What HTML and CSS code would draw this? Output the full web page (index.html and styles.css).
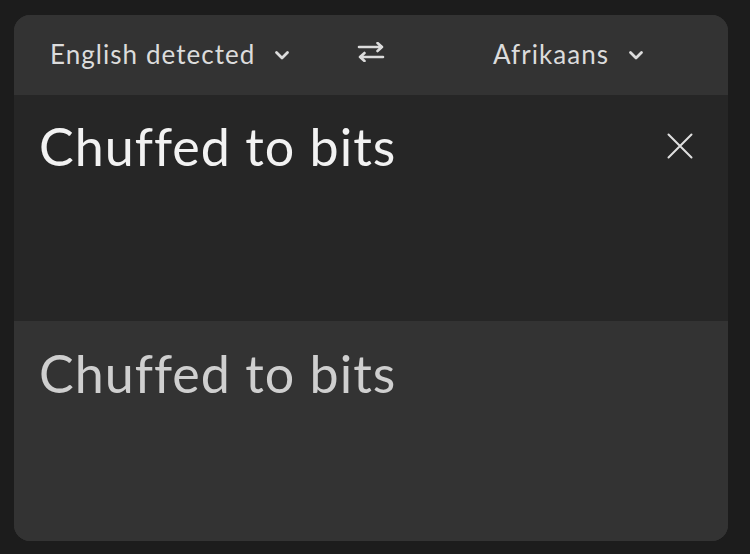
FILE: index.html
```html
<!DOCTYPE html>
<html>
<head>
<meta charset="utf-8">
<link rel="stylesheet" href="styles.css">
</head>
<body>
<div class="card">
  <div class="header">
    <div class="lang lang-from">
      <span class="lang-name">English detected</span>
      <svg class="chev" width="16" height="12" viewBox="0 0 16 12"><path d="M2.5 3.5 L8 9 L13.5 3.5" fill="none" stroke="#dcdcdc" stroke-width="2.8" stroke-linecap="round" stroke-linejoin="round"/></svg>
    </div>
    <div class="swap">
      <svg width="28" height="20" viewBox="0 0 28 20"><g fill="none" stroke="#dcdcdc" stroke-width="2.6" stroke-linecap="round" stroke-linejoin="round"><path d="M2 5 H25 M20.5 1 L25 5 L20.5 9"/><path d="M26 15 H3 M7.5 11 L3 15 L7.5 19"/></g></svg>
    </div>
    <div class="lang lang-to">
      <span class="lang-name">Afrikaans</span>
      <svg class="chev" width="16" height="12" viewBox="0 0 16 12"><path d="M2.5 3.5 L8 9 L13.5 3.5" fill="none" stroke="#dcdcdc" stroke-width="2.8" stroke-linecap="round" stroke-linejoin="round"/></svg>
    </div>
  </div>
  <div class="input">
    <div class="source-text">Chuffed to bits</div>
    <svg class="clear" width="26" height="26" viewBox="0 0 26 26"><path d="M1.5 1.5 L24.5 24.5 M24.5 1.5 L1.5 24.5" fill="none" stroke="#e0e0e0" stroke-width="2" stroke-linecap="round"/></svg>
  </div>
  <div class="output">
    <div class="target-text">Chuffed to bits</div>
  </div>
</div>
</body>
</html>
```
FILE: styles.css
```css
html, body {
  margin: 0;
  padding: 0;
  background: #1c1c1c;
  width: 750px;
  height: 554px;
  overflow: hidden;
}
body {
  padding: 15px 22px 13px 14px;
  box-sizing: border-box;
  font-family: Lato, "Open Sans", sans-serif;
  font-variant-ligatures: none;
}
.card {
  height: 526px;
  border-radius: 16px;
  overflow: hidden;
  display: flex;
  flex-direction: column;
  background: #333333;
}
.header {
  height: 80px;
  flex: none;
  display: grid;
  grid-template-columns: 1fr auto 1fr;
  align-items: center;
  background: #333333;
}
.lang {
  display: flex;
  align-items: center;
  color: #dcdcdc;
  font-size: 26px;
  letter-spacing: 1.05px;
  margin-top: -3px;
}
.lang-name {
  line-height: 1;
}
.lang-from {
  padding-left: 36px;
}
.lang-to {
  padding-left: 108px;
}
.chev {
  margin-left: 19px;
  margin-top: 2px;
}
.swap {
  display: flex;
  align-items: center;
  margin-top: -6px;
}
.input {
  height: 226px;
  flex: none;
  background: #262626;
  display: flex;
  justify-content: space-between;
  align-items: flex-start;
  padding: 0 35px 0 25px;
  box-sizing: border-box;
}
.source-text {
  color: #f2f2f2;
  font-size: 52px;
  letter-spacing: 1px;
  line-height: 1;
  margin-top: 25px;
}
.clear {
  margin-top: 38px;
}
.output {
  flex: 1;
  background: #333333;
  padding: 0 25px;
}
.target-text {
  color: #cfcfcf;
  font-size: 52px;
  letter-spacing: 1px;
  line-height: 1;
  margin-top: 26px;
}
```
